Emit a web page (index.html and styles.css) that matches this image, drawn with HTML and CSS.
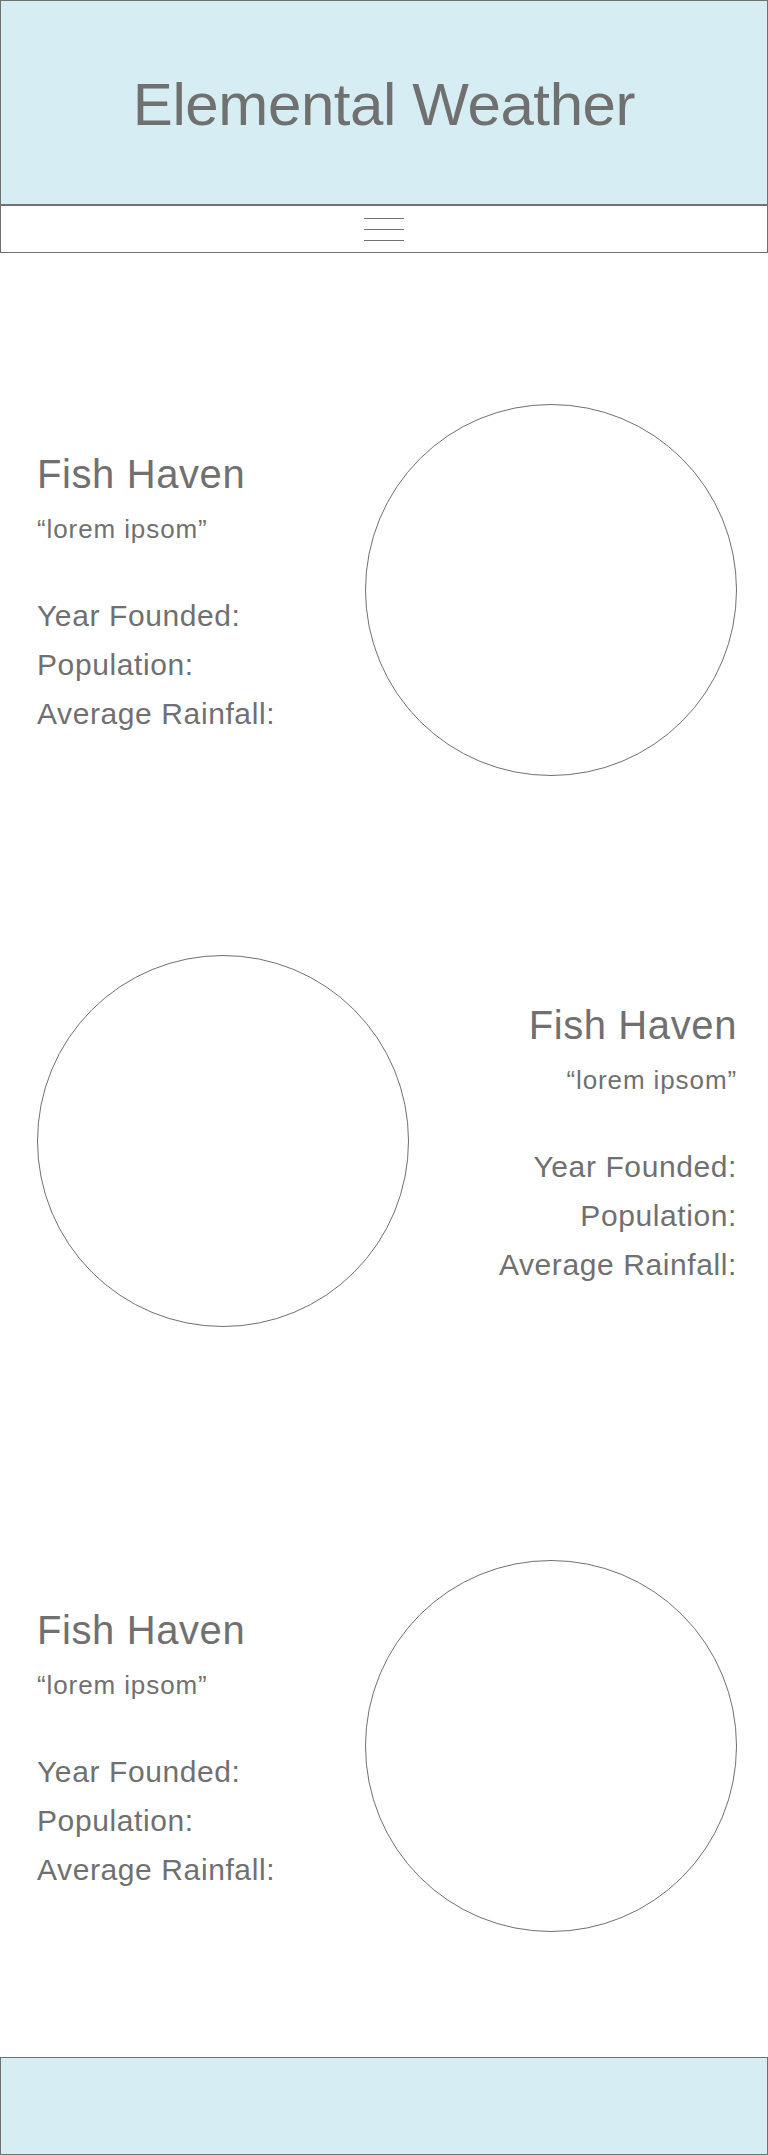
FILE: index.html
```html
<!DOCTYPE html>
<html lang="en">
<head>
<meta charset="utf-8">
<title>Elemental Weather</title>
<link rel="stylesheet" href="styles.css">
</head>
<body>
<header class="site-header">
  <h1 class="site-title">Elemental Weather</h1>
</header>
<nav class="site-nav">
  <button class="menu-toggle" type="button" aria-label="Menu">
    <span class="menu-bar"></span>
    <span class="menu-bar"></span>
    <span class="menu-bar"></span>
  </button>
</nav>
<main class="towns">
  <section class="town town--first">
    <div class="town-info">
      <h2 class="town-name">Fish Haven</h2>
      <p class="town-motto">“lorem ipsom”</p>
      <ul class="town-facts">
        <li>Year Founded:</li>
        <li>Population:</li>
        <li>Average Rainfall:</li>
      </ul>
    </div>
    <div class="town-photo"></div>
  </section>
  <section class="town town--reverse town--second">
    <div class="town-photo"></div>
    <div class="town-info">
      <h2 class="town-name">Fish Haven</h2>
      <p class="town-motto">“lorem ipsom”</p>
      <ul class="town-facts">
        <li>Year Founded:</li>
        <li>Population:</li>
        <li>Average Rainfall:</li>
      </ul>
    </div>
  </section>
  <section class="town town--third">
    <div class="town-info">
      <h2 class="town-name">Fish Haven</h2>
      <p class="town-motto">“lorem ipsom”</p>
      <ul class="town-facts">
        <li>Year Founded:</li>
        <li>Population:</li>
        <li>Average Rainfall:</li>
      </ul>
    </div>
    <div class="town-photo"></div>
  </section>
</main>
<footer class="site-footer"></footer>
</body>
</html>
```

FILE: styles.css
```css
* {
  box-sizing: border-box;
}

html, body {
  margin: 0;
  padding: 0;
}

body {
  font-family: "Liberation Sans", Arial, Helvetica, sans-serif;
  color: #707070;
  background: #ffffff;
}

.site-header {
  height: 205px;
  background: #d6eef3;
  border: 1px solid #707070;
  display: flex;
  align-items: center;
  justify-content: center;
}

.site-title {
  margin: 0;
  padding-top: 4px;
  font-size: 60px;
  line-height: 60px;
  letter-spacing: -0.4px;
  font-weight: normal;
  color: #707070;
}

.site-nav {
  height: 48px;
  border: 1px solid #707070;
  display: flex;
  align-items: center;
  justify-content: center;
}

.menu-toggle {
  display: flex;
  flex-direction: column;
  gap: 10px;
  width: 40px;
  padding: 0;
  margin: 1px 0 0;
  border: 0;
  background: none;
  cursor: pointer;
}

.menu-bar {
  display: block;
  height: 1px;
  width: 40px;
  background: #707070;
}

.towns {
  padding: 151px 31px 125px 37px;
}

.town {
  display: flex;
  align-items: center;
  justify-content: space-between;
}

.town--second {
  margin-top: 179px;
}

.town--third {
  margin-top: 233px;
}

.town-info {
  padding-top: 7px;
}

.town--reverse .town-info {
  text-align: right;
}

.town-name {
  margin: 0;
  font-size: 40px;
  line-height: 48px;
  letter-spacing: 0.6px;
  font-weight: normal;
}

.town-motto {
  margin: 15px 0 0;
  font-size: 26px;
  line-height: 32px;
  letter-spacing: 0.9px;
}

.town-facts {
  list-style: none;
  margin: 46px 0 0;
  padding: 0;
  font-size: 30px;
  line-height: 49px;
  letter-spacing: 0.6px;
}

.town-photo {
  flex: none;
  width: 372px;
  height: 372px;
  border: 1px solid #707070;
  border-radius: 50%;
}

.site-footer {
  height: 98px;
  background: #d6eef3;
  border: 1px solid #707070;
}
```
